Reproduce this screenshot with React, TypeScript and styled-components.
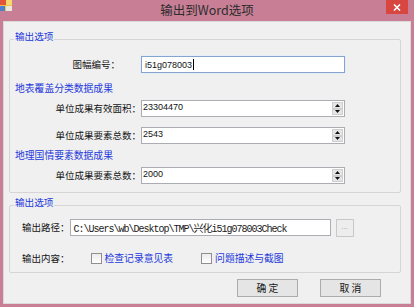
import React from "react";
import styled, { createGlobalStyle } from "styled-components";

const CJK = `"Noto Sans CJK SC", "Noto Sans", sans-serif`;
const BLUE = "#2438dc";

const GlobalStyle = createGlobalStyle`
  html, body { margin: 0; padding: 0; background: #ffffff; }
  body { font-family: ${CJK}; }
  * { box-sizing: border-box; }
`;

const Frame = styled.div`
  width: 414px;
  height: 307px;
  background: #c87f96;
  display: flex;
  flex-direction: column;
  overflow: hidden;
`;

const TitleBar = styled.div`
  height: 21px;
  flex: none;
  display: grid;
  grid-template-columns: 1fr auto 1fr;
  align-items: start;
`;

const TitleText = styled.div`
  font-family: ${CJK};
  font-size: 12.5px;
  line-height: 20px;
  color: #2c2c2c;
  justify-self: center;
`;

const IconSlot = styled.div`
  justify-self: start;
  width: 12px;
  height: 11px;
  display: flex;
`;

const CloseButton = styled.div`
  justify-self: end;
  width: 22px;
  height: 14px;
  margin-right: 6px;
  background: #d8473f;
  display: flex;
  align-items: center;
  justify-content: center;
`;

const Client = styled.div`
  flex: 1;
  margin: 0 3px 3px 3px;
  background: #f0f0f0;
  border: 1px solid #dadada;
  padding: 17px 9px 0 5px;
  display: flex;
  flex-direction: column;
`;

const GroupBox = styled.section<{ $mt?: number; $pt: number; $pb: number }>`
  position: relative;
  border: 1px solid #d5d5d5;
  border-radius: 2px;
  margin-top: ${(p) => p.$mt ?? 0}px;
  padding: ${(p) => p.$pt}px 0 ${(p) => p.$pb}px 0;
  display: flex;
  flex-direction: column;
`;

const GroupTitle = styled.span`
  position: absolute;
  top: -10px;
  left: 4px;
  padding: 0 1px;
  background: #f0f0f0;
  color: ${BLUE};
  font-family: ${CJK};
  font-size: 9.6px;
  line-height: 12px;
`;

const SectionLabel = styled.div<{ $mt: number }>`
  margin-top: ${(p) => p.$mt}px;
  padding-left: 5px;
  height: 12px;
  color: ${BLUE};
  font-family: ${CJK};
  font-size: 9.8px;
  line-height: 12px;
  white-space: nowrap;
`;

const FieldRow = styled.div<{ $mt: number; $pl?: number }>`
  margin-top: ${(p) => p.$mt}px;
  padding-left: ${(p) => p.$pl ?? 0}px;
  height: 17px;
  display: flex;
  align-items: center;
`;

const FieldLabel = styled.div<{ $w?: number; $pr?: number }>`
  ${(p) => (p.$w ? `width: ${p.$w}px; text-align: right;` : "")}
  padding-right: ${(p) => p.$pr ?? 0}px;
  flex: none;
  font-family: ${CJK};
  font-size: 9.5px;
  line-height: 17px;
  color: #141414;
  white-space: nowrap;
`;

const TextBox = styled.div<{ $w: number; $focused?: boolean }>`
  width: ${(p) => p.$w}px;
  height: 17px;
  flex: none;
  background: #ffffff;
  border: 1px solid ${(p) => (p.$focused ? "#86a5cc" : "#abadb3")};
  box-shadow: ${(p) => (p.$focused ? "0 0 0 1px #e4edf8" : "none")};
  padding: 0 3px;
  display: flex;
  align-items: center;
  font-family: "Liberation Sans", Arial, sans-serif;
  font-size: 9px;
  color: #111;
  white-space: nowrap;
  overflow: hidden;
`;

const Caret = styled.span`
  width: 1px;
  height: 11px;
  background: #000;
  margin-left: 1px;
`;

const PathText = styled.span`
  font-family: "Liberation Mono", ${CJK}, monospace;
  font-size: 10px;
  letter-spacing: -1px;
  color: #1a1a1a;
`;

const SpinBox = styled.div`
  width: 204px;
  height: 17px;
  flex: none;
  background: #ffffff;
  border: 1px solid #abadb3;
  display: flex;
`;

const SpinValue = styled.div`
  flex: 1;
  padding-left: 1px;
  font-family: "Liberation Sans", Arial, sans-serif;
  font-size: 9px;
  line-height: 13px;
  color: #111;
`;

const SpinButtons = styled.div`
  width: 11px;
  margin: 1px;
  display: flex;
  flex-direction: column;
`;

const SpinButton = styled.div`
  flex: 1;
  background: #e6e6e6;
  border: 1px solid #cfcfcf;
  display: flex;
  align-items: center;
  justify-content: center;
`;

const BrowseButton = styled.div`
  width: 18px;
  height: 18px;
  margin-left: 5px;
  flex: none;
  border: 1px solid #c8c8c8;
  background: #ededed;
  color: #a0a0a0;
  font-family: "Liberation Sans", Arial, sans-serif;
  font-size: 8px;
  line-height: 14px;
  text-align: center;
`;

const CheckItem = styled.label<{ $ml: number }>`
  margin-left: ${(p) => p.$ml}px;
  display: flex;
  align-items: center;
`;

const CheckBox = styled.span`
  width: 11px;
  height: 11px;
  border: 1px solid #8f8f8f;
  background: linear-gradient(#ececec, #ffffff);
`;

const CheckText = styled.span`
  margin-left: 3px;
  color: ${BLUE};
  font-family: ${CJK};
  font-size: 9.8px;
  line-height: 17px;
  white-space: nowrap;
`;

const ButtonBar = styled.div`
  margin-top: 6px;
  padding-right: 20px;
  display: flex;
  justify-content: flex-end;
  gap: 22px;
`;

const DialogButton = styled.div`
  width: 61px;
  height: 18px;
  border: 1px solid #acacac;
  background: #e5e5e5;
  font-family: ${CJK};
  font-size: 9.8px;
  line-height: 16px;
  text-align: center;
  color: #141414;
  white-space: pre;
`;

const ArrowUp = () => (
  <svg width="5" height="3" viewBox="0 0 5 3">
    <polygon points="2.5,0 5,3 0,3" fill="#111" />
  </svg>
);
const ArrowDown = () => (
  <svg width="5" height="3" viewBox="0 0 5 3">
    <polygon points="0,0 5,0 2.5,3" fill="#111" />
  </svg>
);

const Spinner: React.FC<{ value: string }> = ({ value }) => (
  <SpinBox>
    <SpinValue>{value}</SpinValue>
    <SpinButtons>
      <SpinButton>
        <ArrowUp />
      </SpinButton>
      <SpinButton>
        <ArrowDown />
      </SpinButton>
    </SpinButtons>
  </SpinBox>
);

export default function App() {
  return (
    <>
      <GlobalStyle />
      <Frame>
        <TitleBar>
          <IconSlot>
            <svg width="12" height="11" viewBox="0 0 12 11">
              <rect x="0" y="0" width="12" height="11" fill="#f3c04a" />
              <rect x="0" y="0" width="6" height="5" fill="#e2553b" />
              <rect x="6" y="0" width="6" height="5" fill="#f6d96a" />
              <rect x="0" y="6" width="5" height="5" fill="#4f7fd0" />
              <rect x="6" y="6" width="6" height="5" fill="#e9e6dc" />
            </svg>
          </IconSlot>
          <TitleText>输出到Word选项</TitleText>
          <CloseButton>
            <svg width="8" height="7" viewBox="0 0 8 7">
              <path d="M1 0.5 L7 6.5 M7 0.5 L1 6.5" stroke="#fff" strokeWidth="1.6" />
            </svg>
          </CloseButton>
        </TitleBar>
        <Client>
          <GroupBox $pt={16} $pb={8}>
            <GroupTitle>输出选项</GroupTitle>
            <FieldRow $mt={0}>
              <FieldLabel $w={131} $pr={21}>图幅编号：</FieldLabel>
              <TextBox $w={204} $focused>
                i51g078003
                <Caret />
              </TextBox>
            </FieldRow>
            <SectionLabel $mt={9}>地表覆盖分类数据成果</SectionLabel>
            <FieldRow $mt={6}>
              <FieldLabel $w={131}>单位成果有效面积：</FieldLabel>
              <Spinner value="23304470" />
            </FieldRow>
            <FieldRow $mt={10}>
              <FieldLabel $w={131}>单位成果要素总数：</FieldLabel>
              <Spinner value="2543" />
            </FieldRow>
            <SectionLabel $mt={5}>地理国情要素数据成果</SectionLabel>
            <FieldRow $mt={6}>
              <FieldLabel $w={131}>单位成果要素总数：</FieldLabel>
              <Spinner value="2000" />
            </FieldRow>
          </GroupBox>
          <GroupBox $mt={12} $pt={0} $pb={5}>
            <GroupTitle>输出选项</GroupTitle>
            <FieldRow $mt={13} $pl={12}>
              <FieldLabel>输出路径：</FieldLabel>
              <TextBox $w={261}>
                <PathText>C:\Users\wb\Desktop\TMP\兴化i51g078003Check</PathText>
              </TextBox>
              <BrowseButton>...</BrowseButton>
            </FieldRow>
            <FieldRow $mt={14} $pl={12}>
              <FieldLabel>输出内容：</FieldLabel>
              <CheckItem $ml={21}>
                <CheckBox />
                <CheckText>检查记录意见表</CheckText>
              </CheckItem>
              <CheckItem $ml={28}>
                <CheckBox />
                <CheckText>问题描述与截图</CheckText>
              </CheckItem>
            </FieldRow>
          </GroupBox>
          <ButtonBar>
            <DialogButton>确 定</DialogButton>
            <DialogButton>取 消</DialogButton>
          </ButtonBar>
        </Client>
      </Frame>
    </>
  );
}
